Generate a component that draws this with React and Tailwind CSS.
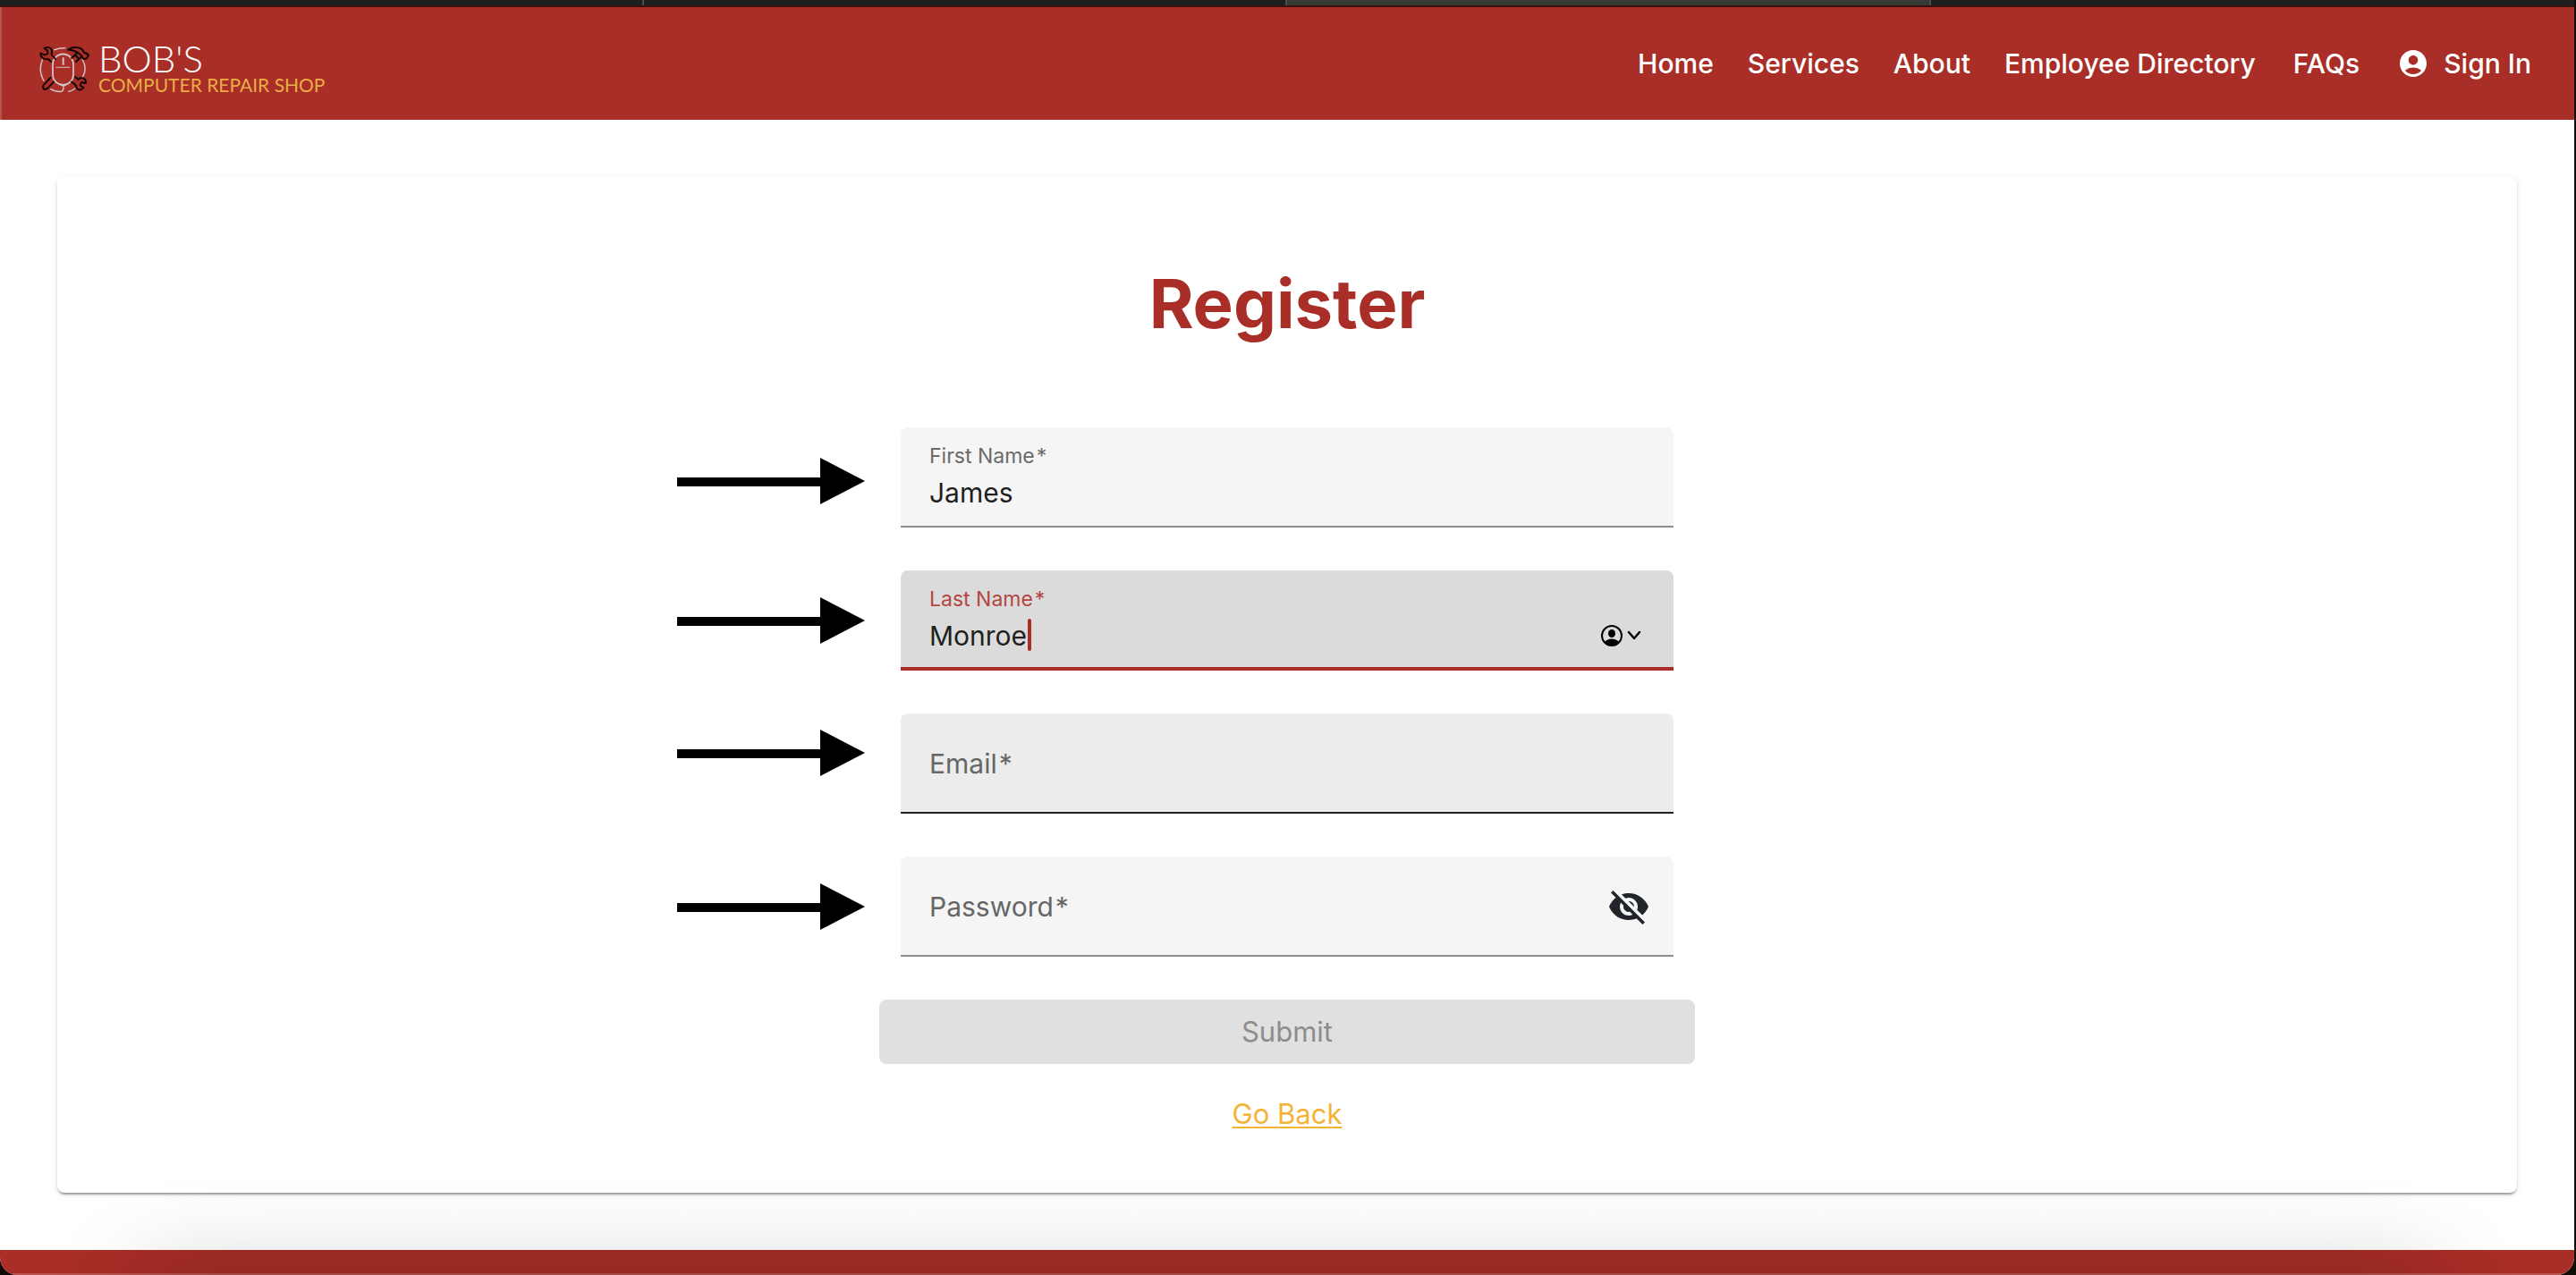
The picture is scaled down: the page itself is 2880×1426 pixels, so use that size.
import { useState } from "react";
import { MdAccountCircle, MdVisibility, MdVisibilityOff } from "react-icons/md";

const links = ["Home", "Services", "About", "Employee Directory"];

function Arrow() {
  return (
    <svg className="w-[210px] h-[52px] shrink-0" viewBox="0 0 210 52" aria-hidden="true">
      <path d="M0 22H160V0L210 26L160 52V32H0Z" fill="#000" />
    </svg>
  );
}

function LogoMark() {
  return (
    <svg className="w-[58px] h-[56px] shrink-0" viewBox="0 0 58 56" fill="none" strokeLinecap="round" strokeLinejoin="round" aria-hidden="true">
      <g stroke="#d0c3c3" strokeWidth="1.5">
        <path d="M18.700 6.700Q24 4.500 30.700 4.700M5.300 18Q0.500 30 7 41.300M50.300 18Q56 28 50.300 37.300M34.700 53.300Q38 53 42 50" />
        <path d="M26.500 46.500H31M28.700 46.500L29 49Q29 53.500 25 53.500Q19 53.500 14.700 50.700" />
        <rect x="17" y="11.500" width="23" height="34.500" rx="11.500" strokeWidth="1.800" />
        <path d="M28.700 16V23" strokeWidth="2" />
        <path d="M21 26.300H36" strokeWidth="1" />
      </g>
      <g stroke="#0d0202" strokeWidth="1.800">
        <path d="M15 20L12 17Q9 18 6 16Q3 14 3.500 10.500L8 12.500L11.500 11L11 7.500L7.500 5Q12 2.500 15 5.500Q17 8 15.500 12L20 17" />
        <path d="M34 6.700Q38 3.500 43 4Q50 4 52 10Q55 10 57 13L54 17L51 16.500Q50 13.500 46 10.500Q40 6.500 34 6.700Z" />
        <path d="M44 10.500L38 16M49 14.500L43 20M42 12.500L46.500 17" />
        <path d="M14.700 37.700L6.700 46Q5 49 7.500 51Q10 51 11.500 49.500L18 42.500" />
        <path d="M38 42.500L43 46.500Q43 51.500 47.500 51.500Q50 51 51.500 49L47.500 46.500L49 43L54 44Q54.500 38.500 49 38Q46 38.500 45.500 40L42 37" />
      </g>
    </svg>
  );
}

function ContactMenu() {
  return (
    <button type="button" aria-label="Autofill contact" className="flex items-center gap-1">
      <svg className="w-[26px] h-[26px]" viewBox="0 0 26 26">
        <circle cx="13" cy="13" r="11" fill="none" stroke="#000" strokeWidth="2" />
        <ellipse cx="13" cy="10.500" rx="4" ry="4.500" fill="#000" />
        <path d="M5 20Q8 16.500 13 16.500Q18 16.500 21 20Q18 24 13 24Q8 24 5 20Z" fill="#000" />
      </svg>
      <svg className="w-[16px] h-[12px]" viewBox="0 0 16 12" fill="none" stroke="#000" strokeWidth="2.500" strokeLinecap="round" strokeLinejoin="round">
        <path d="M2 2L8 9L14 2" />
      </svg>
    </button>
  );
}

function FilledField({ id, label, value, tone, labelTone, children, focused }) {
  return (
    <div className={`relative flex items-start h-[112px] pl-8 pr-9 pt-[53px] rounded-t-lg ${tone}`}>
      <label htmlFor={id} className={`absolute left-8 top-[18px] text-[23px] leading-7 ${labelTone}`}>
        {label}<span className="ml-[2px]">*</span>
      </label>
      <input id={id} type="text" defaultValue={value} className="min-w-0 flex-1 h-10 bg-transparent text-[30px] text-[#1f1f1f] outline-none" />
      {focused && <span className="absolute left-[142px] top-[54px] w-[4px] h-9 rounded-sm bg-[#a82e27]" />}
      {children}
    </div>
  );
}

function EmptyField({ id, label, type, tone, children }) {
  const [value, setValue] = useState("");
  return (
    <div className={`relative flex items-center h-[112px] pl-8 pr-[26px] pt-[2px] rounded-t-lg border-b-2 ${tone}`}>
      {!value && (
        <label htmlFor={id} className="absolute left-8 text-[30px] leading-10 text-[#666]">
          {label}<span className="ml-[2px]">*</span>
        </label>
      )}
      <input id={id} type={type} value={value} onChange={(e) => setValue(e.target.value)} className="min-w-0 flex-1 h-14 bg-transparent text-[30px] text-[#1f1f1f] outline-none" />
      {children}
    </div>
  );
}

function Row({ children, pad }) {
  return (
    <div className="grid grid-cols-[1fr_864px_1fr] w-full">
      <div className={`flex justify-end items-start pr-10 ${pad}`}><Arrow /></div>
      {children}
      <div />
    </div>
  );
}

export default function App() {
  const [shown, setShown] = useState(false);
  return (
    <div className="bg-[#120c06] pr-[2px] font-['Inter',sans-serif]">
      <div className="h-[6px] grid grid-cols-4 bg-[#1e1e1e]">
        <div className="border-r-2 border-[#4a4a4a]" />
        <div className="border-r-2 border-[#4a4a4a]" />
        <div className="border-r-2 border-[#4a4a4a] bg-[#383835]" />
        <div />
      </div>
      <div className="h-[2px] bg-[#3a100e]" />
      <div className="relative flex flex-col bg-white rounded-b-[20px] overflow-hidden">
        <header className="h-[126px] flex items-center justify-between bg-[#a82e27] pl-10 pr-12 border-l-2 border-[#b9534d]">
          <a href="#home" className="flex items-center gap-[10px] pt-3">
            <LogoMark />
            <span className="flex flex-col font-['Lato',sans-serif]">
              <span className="text-[42px] leading-9 font-light text-white">BOB'S</span>
              <span className="text-[21px] leading-6 text-[#e9ad45]">COMPUTER REPAIR SHOP</span>
            </span>
          </a>
          <nav className="flex items-center text-[30px] leading-10 font-medium text-white">
            <div className="flex gap-[38px]">
              {links.map((l) => <a key={l} href="#top">{l}</a>)}
            </div>
            <a href="#faqs" className="ml-[42px]">FAQs</a>
            <a href="#signin" className="ml-[42px] flex items-center gap-4">
              <MdAccountCircle className="size-9" />Sign In
            </a>
          </nav>
        </header>
        <main className="flex-1 p-16 pt-[63px]">
          <form
            onSubmit={(e) => e.preventDefault()}
            className="flex flex-col items-center rounded-lg bg-white pt-[98px] pb-[68px] shadow-[0_4px_2px_-2px_rgba(0,0,0,0.2),0_2px_2px_rgba(0,0,0,0.14),0_2px_6px_rgba(0,0,0,0.12)]"
          >
            <h1 className="text-[76px] leading-[88px] font-bold text-[#a82e27]">Register</h1>
            <div className="mt-[95px] w-full flex flex-col gap-12">
              <Row pad="pt-[34px]">
                <FilledField id="first" label="First Name" value="James" tone="bg-[#f5f5f5] border-b-2 border-[#8e8e8e]" labelTone="text-[#6a6a6a]" />
              </Row>
              <Row pad="pt-[30px]">
                <FilledField id="last" label="Last Name" value="Monroe" focused tone="bg-[#dbdbdb] border-b-4 border-[#a82e27]" labelTone="text-[#b34640]">
                  <div className="h-10 flex items-center"><ContactMenu /></div>
                </FilledField>
              </Row>
              <Row pad="pt-[18px]">
                <EmptyField id="email" label="Email" type="email" tone="bg-[#ececec] border-[#212121]" />
              </Row>
              <Row pad="pt-[30px]">
                <EmptyField id="password" label="Password" type={shown ? "text" : "password"} tone="bg-[#f5f5f5] border-[#8e8e8e]">
                  <button type="button" aria-label="Toggle password visibility" onClick={() => setShown(!shown)}>
                    {shown ? <MdVisibility className="size-12 text-[#212529]" /> : <MdVisibilityOff className="size-12 text-[#212529]" />}
                  </button>
                </EmptyField>
              </Row>
            </div>
            <button type="submit" disabled className="mt-12 h-[72px] w-[912px] max-w-full rounded-lg bg-[#e0e0e0] text-[31px] text-[#8c8c8c]">
              Submit
            </button>
            <a href="#back" className="mt-9 text-[31px] leading-10 text-[#f5b335] underline decoration-2 underline-offset-[3px]">Go Back</a>
          </form>
        </main>
        <footer className="h-[28px] bg-[#a82e27] border-b-2 border-[#b9534d]" />
        <div className="pointer-events-none absolute top-full inset-x-[160px] h-40 shadow-[0_0_110px_rgba(0,0,0,0.22)]" />
      </div>
    </div>
  );
}
